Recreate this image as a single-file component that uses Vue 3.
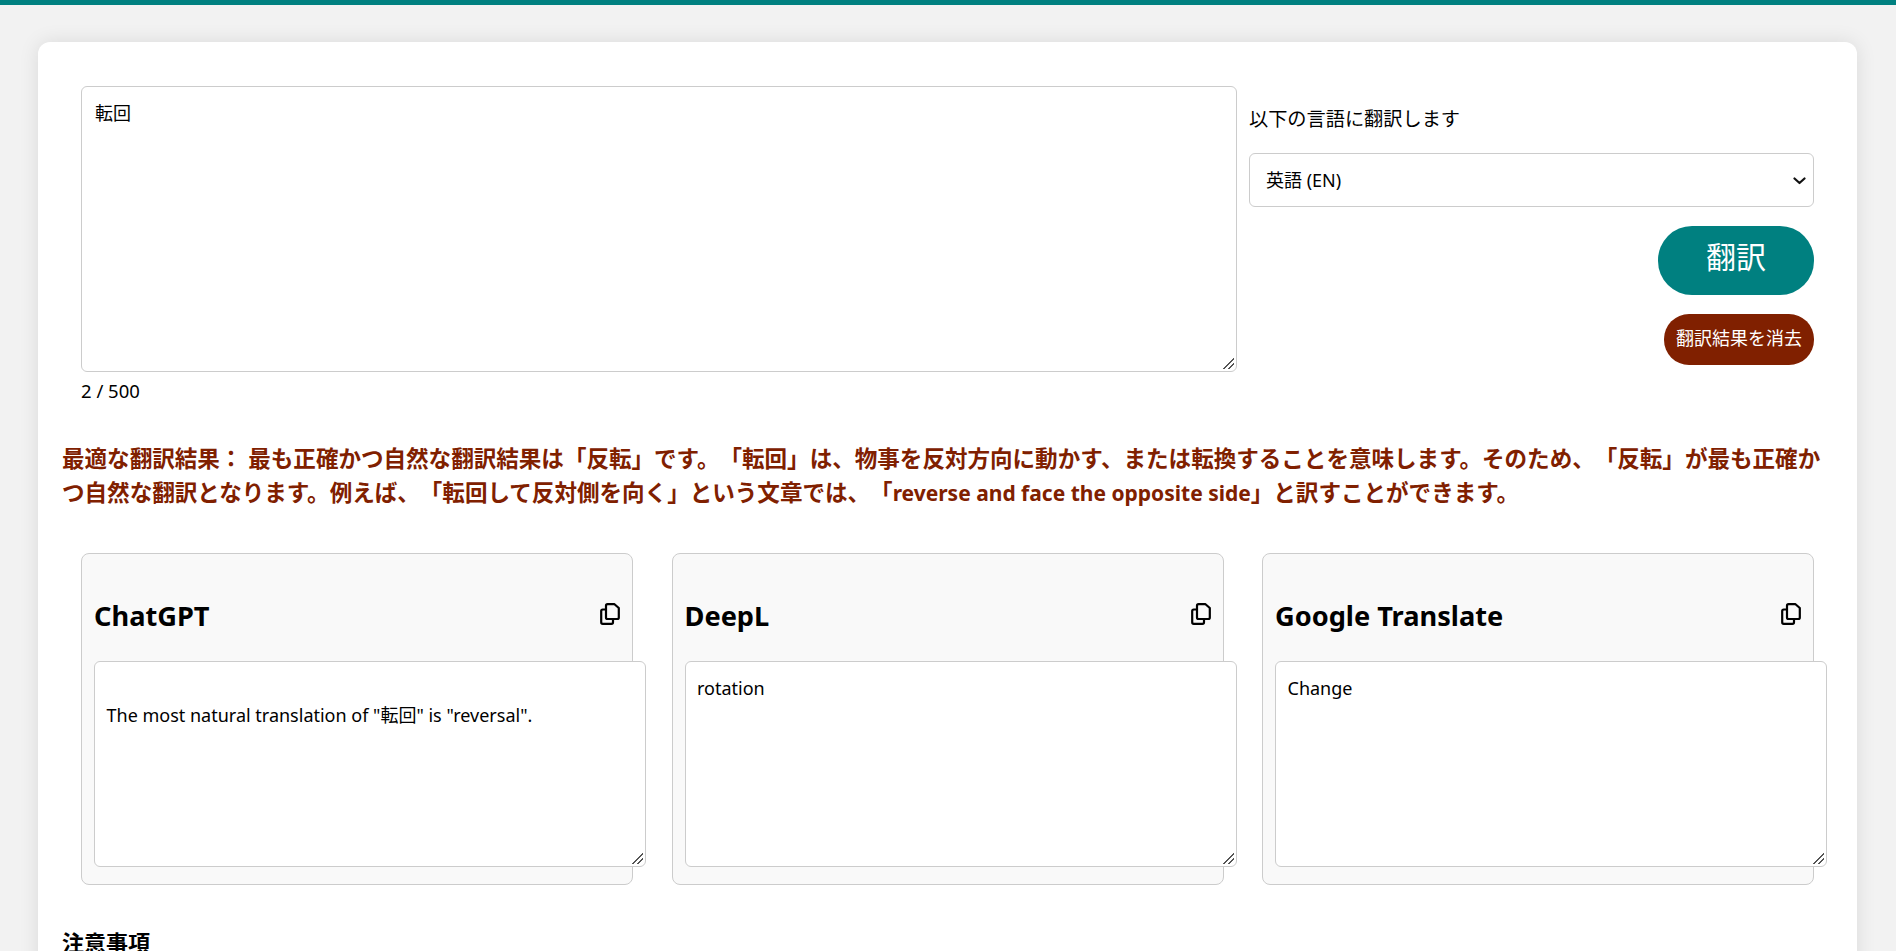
<script setup>
import { ref } from 'vue'

const source = ref('転回')
const lang = ref('EN')
const results = [
  { name: 'ChatGPT', text: '\nThe most natural translation of "転回" is "reversal".' },
  { name: 'DeepL', text: 'rotation' },
  { name: 'Google Translate', text: 'Change' },
]
</script>

<template>
  <div class="page">
    <main class="panel">
      <section class="input-row">
        <div class="input-col">
          <textarea v-model="source" class="source"></textarea>
          <div class="count">2 / 500</div>
        </div>
        <div class="side-col">
          <label class="lang-label">以下の言語に翻訳します</label>
          <div class="lang-wrap">
            <select v-model="lang" class="lang">
              <option value="EN">英語 (EN)</option>
              <option value="JA">日本語 (JA)</option>
            </select>
            <svg class="chevron" width="13" height="8" viewBox="0 0 13 8" fill="none" stroke="#111" stroke-width="2.2" stroke-linecap="round" stroke-linejoin="round">
              <path d="M1.5 1.5L6.5 6L11.5 1.5" />
            </svg>
          </div>
          <button class="btn-translate">翻訳</button>
          <button class="btn-clear">翻訳結果を消去</button>
        </div>
      </section>

      <p class="best">最適な翻訳結果： 最も正確かつ自然な翻訳結果は「反転」です。「転回」は、物事を反対方向に動かす、または転換することを意味します。そのため、「反転」が最も正確かつ自然な翻訳となります。例えば、「転回して反対側を向く」という文章では、「<span class="latin">reverse and face the opposite side</span>」と訳すことができます。</p>

      <section class="results">
        <article v-for="r in results" :key="r.name" class="result">
          <header class="result-head">
            <h3>{{ r.name }}</h3>
            <svg class="copy" width="20" height="22" viewBox="0 0 20 22" fill="none" stroke="#000" stroke-width="2.2" stroke-linejoin="round" stroke-linecap="round">
              <path d="M7.5 1.2H14.5L18.8 5V14.5A1.5 1.5 0 0 1 17.3 16H7.5A1.5 1.5 0 0 1 6 14.5V2.7A1.5 1.5 0 0 1 7.5 1.2Z" />
              <path d="M6 6.5H2.7A1.5 1.5 0 0 0 1.2 8V19.3A1.5 1.5 0 0 0 2.7 20.8H11.5A1.5 1.5 0 0 0 13 19.3V16" />
            </svg>
          </header>
          <textarea class="output" readonly :value="r.text"></textarea>
        </article>
      </section>

      <h3 class="notes">注意事項</h3>
    </main>
  </div>
</template>

<style>
html, body { overflow: hidden; background: #f2f2f2; }
</style>

<style scoped>
.page {
  height: 951px;
  box-sizing: border-box;
  border-top: 5px solid #008080;
  padding: 37px 39px 0 38px;
  overflow: hidden;
  background: #f2f2f2;
  font-family: "Noto Sans", "Noto Sans CJK JP", sans-serif;
  line-height: 1.5;
  color: #000;
  text-spacing-trim: space-all;
}
.panel {
  background: #fff;
  border-radius: 12px;
  box-shadow: 0 0 20px rgba(0, 0, 0, 0.1);
  padding: 44px 24px 40px;
}
.input-row {
  display: flex;
  gap: 12px;
  padding: 0 19px;
}
.input-col { width: 1156px; flex: none; }
.source, .output, .lang {
  font-family: inherit;
  font-size: 18px;
  line-height: 27px;
  color: #000;
  background: #fff;
  border: 1px solid #ccc;
  border-radius: 6px;
  box-sizing: border-box;
  outline: none;
}
.source::-webkit-resizer, .output::-webkit-resizer {
  background: linear-gradient(135deg, transparent 54%, #555 54% 62%, transparent 62% 75%, #555 75% 83%, transparent 83%) 0 0 / 13px 13px no-repeat;
}
.source {
  display: block;
  width: 1156px;
  height: 286px;
  padding: 13px 13px;
}
.count {
  margin-top: 4.5px;
  font-size: 18.5px;
  line-height: 27px;
}
.side-col {
  flex: 1;
  display: flex;
  flex-direction: column;
  align-items: flex-end;
  padding-top: 18px;
}
.lang-label {
  align-self: flex-start;
  font-size: 19.2px;
  line-height: 29px;
  margin-bottom: 20px;
}
.lang-wrap {
  position: relative;
  width: 100%;
}
.lang {
  display: block;
  width: 100%;
  height: 54px;
  padding: 0 16px;
  appearance: none;
}
.chevron {
  position: absolute;
  right: 8px;
  top: 24px;
  pointer-events: none;
}
.btn-translate, .btn-clear {
  border: none;
  color: #fff;
  font-family: inherit;
}
.btn-translate {
  margin-top: 19px;
  width: 156px;
  height: 69px;
  border-radius: 34px;
  background: #008080;
  font-size: 30px;
  padding: 0 0 12px;
}
.btn-clear {
  margin-top: 19px;
  width: 150px;
  height: 51px;
  border-radius: 25px;
  background: #802000;
  font-size: 18px;
  padding: 0 0 5px;
}
.best {
  margin: 38px 10px 0 0;
  font-size: 22.56px;
  line-height: 34px;
  font-weight: 700;
  color: #802000;
}
.latin { font-size: 21px; }
.results {
  display: flex;
  gap: 38.5px;
  padding: 0 19px;
  margin-top: 43px;
}
.result {
  flex: 1 1 0;
  height: 332px;
  box-sizing: border-box;
  background: #f9f9f9;
  border: 1px solid #ccc;
  border-radius: 8px;
  padding: 12px 12px 0;
}
.result-head {
  display: flex;
  justify-content: space-between;
  align-items: flex-start;
  height: 95px;
}
.result-head h3 {
  margin: 29px 0 0;
  font-size: 27.2px;
  line-height: 41px;
  font-weight: 700;
}
.copy {
  margin-top: 37px;
  flex: none;
}
.output {
  display: block;
  width: calc(100% + 26px);
  height: 206px;
  padding: 13px 11.5px;
}
.notes {
  margin: 40px 0 0;
  font-size: 22px;
  line-height: 34px;
  font-weight: 700;
}
</style>
